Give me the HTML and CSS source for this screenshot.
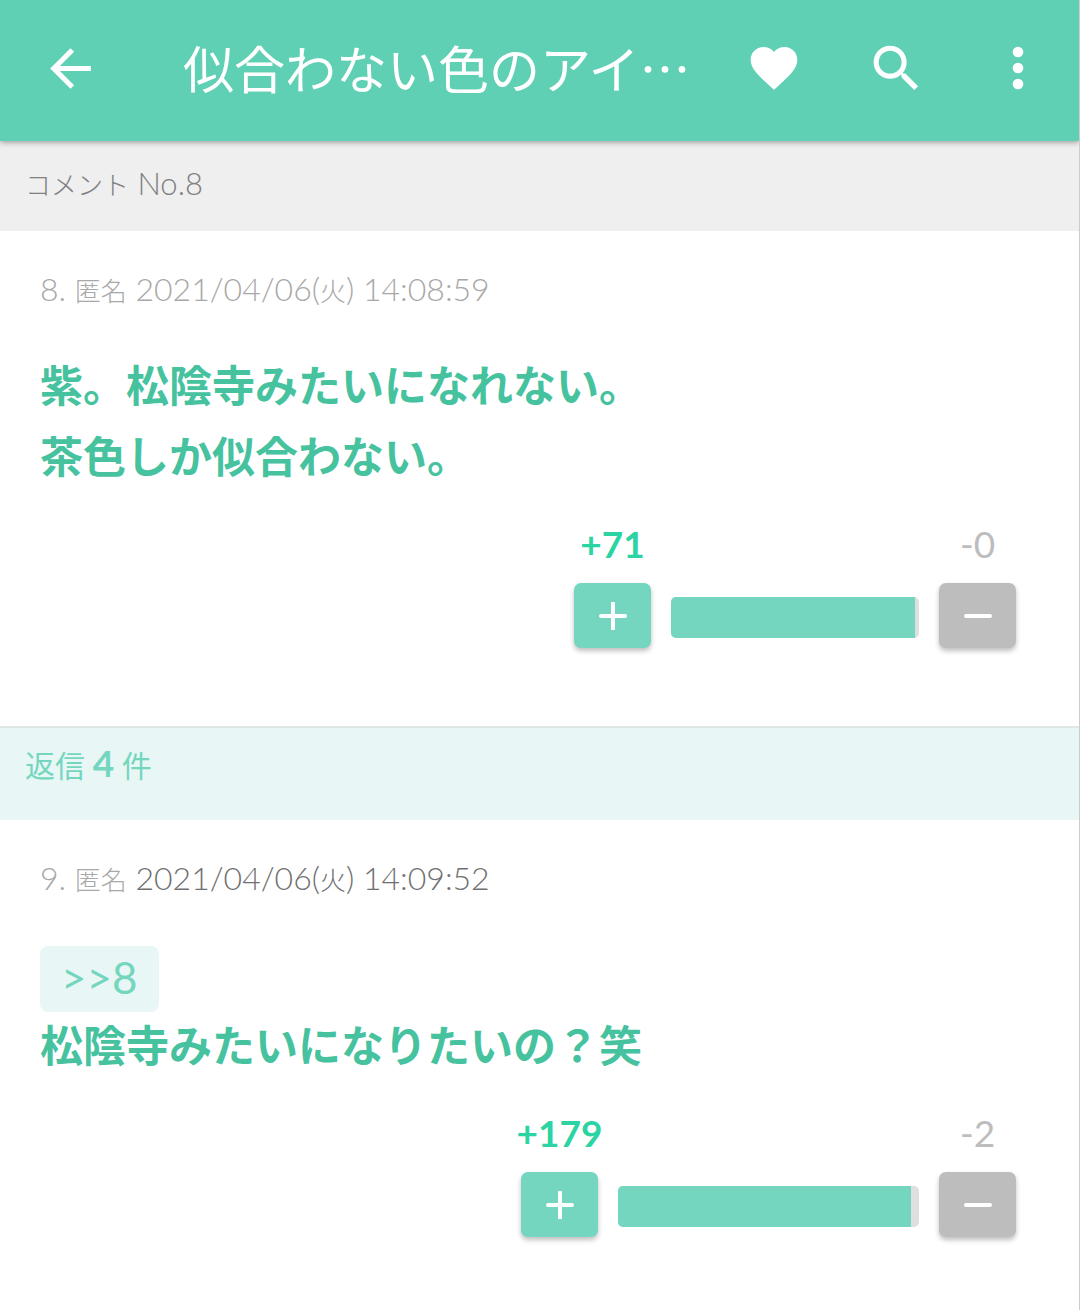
FILE: index.html
```html
<!DOCTYPE html>
<html lang="ja">
<head>
    <meta charset="UTF-8">
    <meta name="viewport" content="width=device-width, initial-scale=1.0">
    <title>コメント No.8</title>
    <link rel="stylesheet" href="styles.css">
</head>
<body>
    <header class="app-bar">
        <button class="icon-btn" type="button" aria-label="戻る">
            <svg class="icon-arrow" viewBox="0 0 24 24"><path d="M20 11H7.83l5.59-5.59L12 4l-8 8 8 8 1.41-1.41L7.83 13H20v-2z"/></svg>
        </button>
        <h1 class="title">似合わない色のアイ…</h1>
        <button class="icon-btn" type="button" aria-label="お気に入り">
            <svg class="icon-heart" viewBox="0 0 24 24"><path d="M12 21.35l-1.45-1.32C5.4 15.36 2 12.28 2 8.5 2 5.42 4.42 3 7.5 3c1.74 0 3.41.81 4.5 2.09C13.09 3.81 14.76 3 16.5 3 19.58 3 22 5.42 22 8.5c0 3.78-3.4 6.86-8.55 11.54L12 21.35z"/></svg>
        </button>
        <button class="icon-btn" type="button" aria-label="検索">
            <svg class="icon-search" viewBox="0 0 24 24"><path d="M15.5 14h-.79l-.28-.27C15.41 12.59 16 11.11 16 9.5 16 5.91 13.09 3 9.5 3S3 5.91 3 9.5 5.91 16 9.5 16c1.61 0 3.09-.59 4.23-1.57l.27.28v.79l5 4.99L20.49 19l-4.99-5zm-6 0C7.01 14 5 11.99 5 9.5S7.01 5 9.5 5 14 7.01 14 9.5 11.99 14 9.5 14z"/></svg>
        </button>
        <button class="icon-btn" type="button" aria-label="メニュー">
            <svg class="icon-more" viewBox="0 0 24 24"><circle cx="12" cy="6" r="2"/><circle cx="12" cy="12" r="2"/><circle cx="12" cy="18" r="2"/></svg>
        </button>
    </header>

    <main>
        <h2 class="section-head"><span class="kanji">コメント</span> No.8</h2>

        <article class="comment">
            <p class="meta">8. <span class="kanji">匿名</span> <time>2021/04/06(<span class="kanji">火</span>) 14:08:59</time></p>
            <p class="text">紫。松陰寺みたいになれない。<br>茶色しか似合わない。</p>
            <div class="votes">
                <span class="count plus">+71</span>
                <span class="count minus">-0</span>
                <button class="vote-btn vote-plus" type="button" aria-label="プラス">
                    <svg viewBox="0 0 28 28"><path d="M2 14h24M14 1v26"/></svg>
                </button>
                <div class="bar" style="width: 248px"><div class="fill" style="width: 98.5%"></div></div>
                <button class="vote-btn vote-minus" type="button" aria-label="マイナス">
                    <svg viewBox="0 0 28 28"><path d="M2 14h24"/></svg>
                </button>
            </div>
        </article>

        <h2 class="replies-head">返信 <b>4</b> 件</h2>

        <article class="comment">
            <p class="meta">9. <span class="kanji">匿名</span> <time class="dark">2021/04/06(<span class="kanji">火</span>) 14:09:52</time></p>
            <a class="anchor" href="#">&gt;&gt;8</a>
            <p class="text">松陰寺みたいになりたいの？笑</p>
            <div class="votes">
                <span class="count plus">+179</span>
                <span class="count minus">-2</span>
                <button class="vote-btn vote-plus" type="button" aria-label="プラス">
                    <svg viewBox="0 0 28 28"><path d="M2 14h24M14 1v26"/></svg>
                </button>
                <div class="bar" style="width: 301px"><div class="fill" style="width: 97.5%"></div></div>
                <button class="vote-btn vote-minus" type="button" aria-label="マイナス">
                    <svg viewBox="0 0 28 28"><path d="M2 14h24"/></svg>
                </button>
            </div>
        </article>
    </main>
</body>
</html>
```
FILE: styles.css
```css
* {
    box-sizing: border-box;
}
body {
    margin: 0;
    min-height: 100vh;
    font-family: Lato, "Noto Sans CJK JP", sans-serif;
    background-color: #fff;
    border-right: 1px solid #ccc;
    color: #808080;
}
h1, h2, p {
    margin: 0;
    font-weight: 400;
}
button {
    padding: 0;
    border: none;
    cursor: pointer;
}

/* Top bar */
.app-bar {
    display: flex;
    align-items: center;
    position: relative;
    height: 141px;
    padding: 0 0 5px 9px;
    background-color: #5fd0b4;
    box-shadow: 0 1px 6px rgba(0, 0, 0, 0.4);
}
.icon-btn {
    display: flex;
    justify-content: center;
    align-items: center;
    flex: none;
    width: 122px;
    height: 122px;
    background: none;
}
.icon-btn svg {
    width: 56px;
    height: 56px;
    fill: #fff;
}
.icon-btn .icon-arrow,
.icon-btn .icon-search {
    width: 61px;
    height: 61px;
}
.icon-btn .icon-more {
    width: 64px;
    height: 64px;
}
.title {
    flex: 1;
    padding: 0 0 2px 52px;
    font-family: "Noto Sans CJK JP", sans-serif;
    font-size: 51px;
    line-height: 72px;
    color: #fff;
    white-space: nowrap;
    overflow: hidden;
}

.section-head {
    height: 90px;
    padding: 22px 25px;
    font-size: 31px;
    line-height: 40px;
    font-weight: 300;
    background-color: #efefef;
}
.kanji {
    font-size: 26px;
}

/* Comment */
.comment {
    padding: 38px 40px 78px;
}
.meta {
    font-size: 32px;
    line-height: 40px;
    color: #a8a8a8;
    margin-bottom: 37px;
    font-weight: 300;
}
.dark {
    color: #707070;
}
.text {
    font-family: "Noto Sans CJK JP", sans-serif;
    font-size: 43px;
    font-weight: 700;
    line-height: 71px;
    color: #46c29f;
}
.anchor {
    display: block;
    width: fit-content;
    margin: 46px 0 -4px;
    padding: 0 21px 4px;
    border-radius: 8px;
    background-color: #e8f7f5;
    color: #74d6be;
    font-size: 44px;
    line-height: 62px;
    text-decoration: none;
}

/* Plus / minus votes */
.votes {
    display: grid;
    grid-template-columns: 77px auto 77px;
    column-gap: 20px;
    justify-content: end;
    align-items: center;
    margin-top: 34px;
    padding-right: 23px;
}
.count {
    justify-self: center;
    font-size: 37px;
    line-height: 40px;
    margin-bottom: 19px;
    white-space: nowrap;
}
.plus {
    color: #2bd4a2;
    font-weight: 700;
}
.minus {
    grid-column: 3;
    color: #bdbdbd;
}
.vote-btn {
    display: flex;
    justify-content: center;
    align-items: center;
    height: 65px;
    border-radius: 7px;
    box-shadow: 0 3px 5px rgba(0, 0, 0, 0.25);
}
.vote-btn svg {
    width: 28px;
    height: 28px;
    fill: none;
    stroke: #fff;
    stroke-width: 4;
    stroke-linecap: round;
}
.vote-plus {
    background-color: #74d6be;
}
.vote-minus {
    background-color: #bdbdbd;
}
.bar {
    height: 41px;
    margin-top: 4px;
    border-radius: 5px;
    background-color: #dfdfdf;
    overflow: hidden;
}
.fill {
    height: 100%;
    background-color: #74d6be;
}

.replies-head {
    height: 94px;
    padding: 13px 25px;
    border-top: 2px solid #dde6e4;
    background-color: #e8f7f5;
    color: #74d6be;
    font-size: 30px;
    line-height: 44px;
}
.replies-head b {
    font-size: 37px;
}
```
